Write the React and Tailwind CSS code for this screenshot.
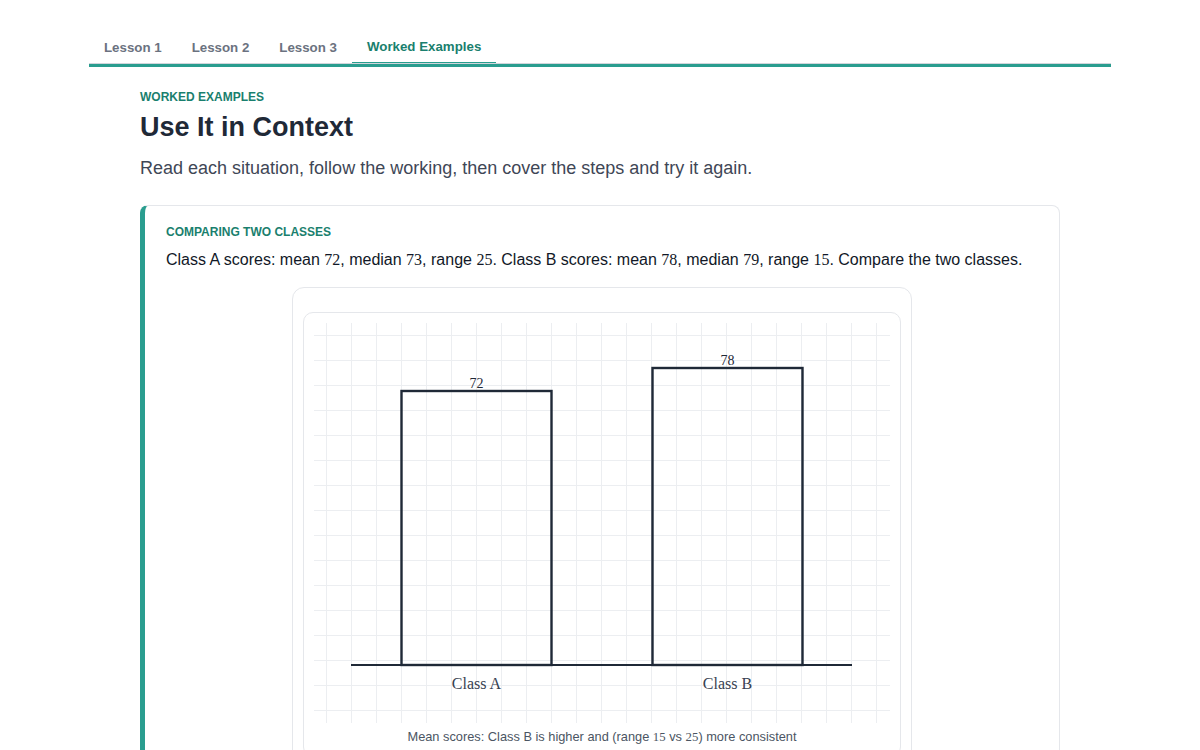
import React from "react";

const N = ({ children }) => (
  <span className="font-['Liberation_Serif',serif]">{children}</span>
);

function Chart() {
  const vs = Array.from({ length: 23 }, (_, k) => 12.5 + 25 * k);
  const hs = Array.from({ length: 16 }, (_, k) => 12.5 + 25 * k);
  return (
    <svg width="576" height="400" viewBox="0 0 576 400" className="block">
      {vs.map((x) => (
        <line key={"v" + x} x1={x} y1={0} x2={x} y2={400} stroke="#eceef1" strokeWidth="1" />
      ))}
      {hs.map((y) => (
        <line key={"h" + y} x1={0} y1={y} x2={576} y2={y} stroke="#eceef1" strokeWidth="1" />
      ))}
      <line x1="37" y1="342" x2="538" y2="342" stroke="#1f2937" strokeWidth="1.8" />
      <rect x="87.5" y="68" width="150" height="274" fill="none" stroke="#1f2937" strokeWidth="2.4" />
      <rect x="338.5" y="45" width="150" height="297" fill="none" stroke="#1f2937" strokeWidth="2.4" />
      <text x="162.5" y="65" textAnchor="middle" fontFamily="'Liberation Serif', serif" fontSize="14" fill="#1f2937">72</text>
      <text x="413.5" y="42" textAnchor="middle" fontFamily="'Liberation Serif', serif" fontSize="14" fill="#1f2937">78</text>
      <text x="162.5" y="366" textAnchor="middle" fontFamily="'Liberation Serif', serif" fontSize="16" fill="#374151">Class A</text>
      <text x="413.5" y="366" textAnchor="middle" fontFamily="'Liberation Serif', serif" fontSize="16" fill="#374151">Class B</text>
    </svg>
  );
}

export default function App() {
  const tabs = ["Lesson 1", "Lesson 2", "Lesson 3", "Worked Examples"];
  return (
    <div className="min-h-screen bg-white font-['Liberation_Sans',Arial,sans-serif] pt-[30px]">
      <div className="max-w-[1022px] mx-auto border-b-[3px] border-[#2a9d8f]">
        <div className="flex border-b border-[#d1d5db]">
          {tabs.map((t, i) => (
            <div
              key={t}
              className={
                i === 3
                  ? "h-[33px] pt-[2px] px-[15px] flex items-center text-[13.3px] leading-[16px] font-bold text-[#1a7f6e] border-b border-[#2a9d8f] -mb-px"
                  : "h-[33px] pt-[2px] px-[15px] flex items-center text-[13.3px] leading-[16px] font-bold text-[#6b7280]"
              }
            >
              {t}
            </div>
          ))}
        </div>
      </div>

      <div className="max-w-[920px] mx-auto pt-[22px]">
        <div className="text-[12px] leading-[16px] font-bold uppercase text-[#1a7f6e]">Worked Examples</div>
        <h1 className="mt-[5px] text-[27px] leading-[34px] font-bold text-[#1f2937]">Use It in Context</h1>
        <p className="mt-[11px] text-[18px] leading-[26px] text-[#3f4756]">
          Read each situation, follow the working, then cover the steps and try it again.
        </p>

        <div className="mt-[24px] border border-[#e5e7eb] border-l-[5px] border-l-[#2a9d8f] rounded-lg px-[21px] pt-[19px] pb-6">
          <div className="text-[12px] leading-[14px] font-bold uppercase text-[#1a7f6e]">Comparing Two Classes</div>
          <p className="mt-[10px] text-[16px] leading-[22px] text-[#111827]">
            Class A scores: mean <N>72</N>, median <N>73</N>, range <N>25</N>. Class B scores: mean <N>78</N>, median{" "}
            <N>79</N>, range <N>15</N>. Compare the two classes.
          </p>

          <div className="mt-[16px] mx-auto w-[620px] border border-[#e5e7eb] rounded-xl pt-6 px-[10px] pb-[10px]">
            <div className="border border-[#e5e7eb] rounded-[10px] p-[10px]">
              <Chart />
              <div className="mt-[5px] text-center text-[12.8px] leading-[18px] text-[#4b5563]">
                Mean scores: Class B is higher and (range <N>15</N> vs <N>25</N>) more consistent
              </div>
            </div>
          </div>
        </div>
      </div>
    </div>
  );
}
